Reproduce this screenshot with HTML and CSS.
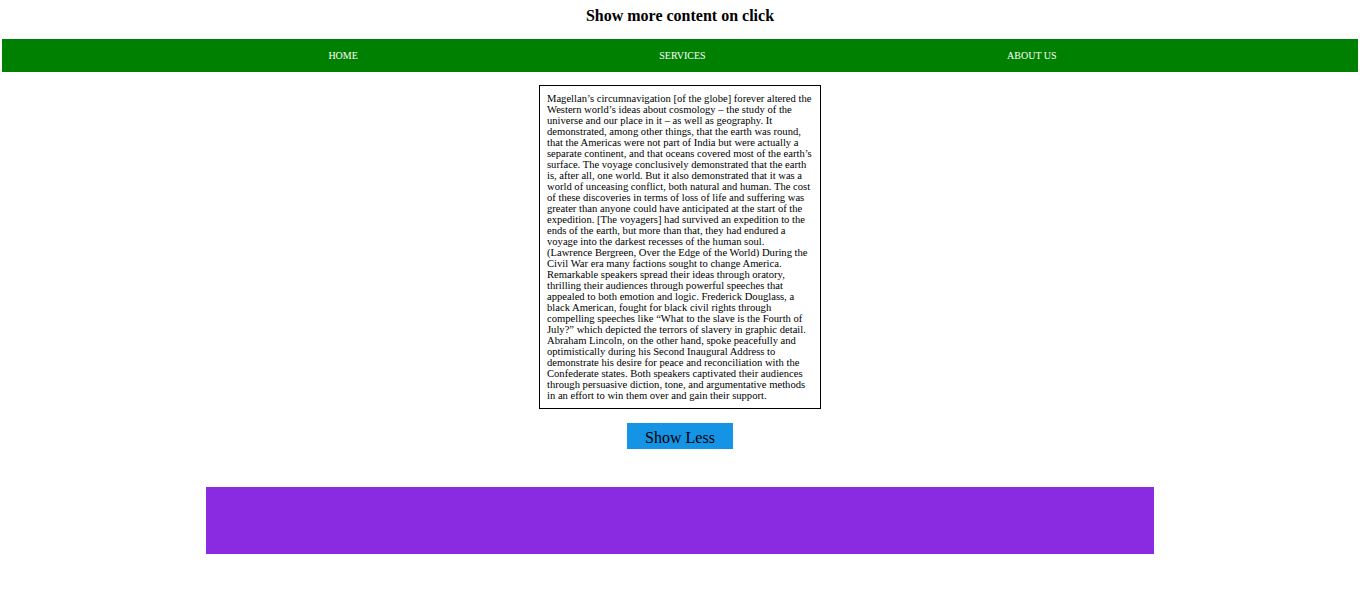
FILE: index.html
```html
<!DOCTYPE html>
<html>
<head>
<meta charset="utf-8">
<title>Show more content on click</title>
<link rel="stylesheet" href="styles.css">
</head>
<body>
<h1 class="title">Show more content on click</h1>
<nav class="nav">
  <ul class="nav-list">
    <li class="nav-item">HOME</li>
    <li class="nav-item">SERVICES</li>
    <li class="nav-item">ABOUT US</li>
  </ul>
</nav>
<main class="main">
  <div class="text-box">Magellan’s circumnavigation [of the globe] forever altered the Western world’s ideas about cosmology – the study of the universe and our place in it – as well as geography. It demonstrated, among other things, that the earth was round, that the Americas were not part of India but were actually a separate continent, and that oceans covered most of the earth’s surface. The voyage conclusively demonstrated that the earth is, after all, one world. But it also demonstrated that it was a world of unceasing conflict, both natural and human. The cost of these discoveries in terms of loss of life and suffering was greater than anyone could have anticipated at the start of the expedition. [The voyagers] had survived an expedition to the ends of the earth, but more than that, they had endured a voyage into the darkest recesses of the human soul.<br>(Lawrence Bergreen, Over the Edge of the World) During the Civil War era many factions sought to change America. Remarkable speakers spread their ideas through oratory, thrilling their audiences through powerful speeches that appealed to both emotion and logic. Frederick Douglass, a black American, fought for black civil rights through compelling speeches like “What to the slave is the Fourth of July?” which depicted the terrors of slavery in graphic detail. Abraham Lincoln, on the other hand, spoke peacefully and optimistically during his Second Inaugural Address to demonstrate his desire for peace and reconciliation with the Confederate states. Both speakers captivated their audiences through persuasive diction, tone, and argumentative methods in an effort to win them over and gain their support.</div>
  <button class="toggle-btn" type="button">Show Less</button>
  <div class="purple-box"></div>
</main>
</body>
</html>
```

FILE: styles.css
```css
html, body {
  margin: 0;
  padding: 0;
  background: #ffffff;
}

body {
  font-family: "Liberation Serif", "Times New Roman", serif;
  color: #000000;
}

.title {
  margin: 0;
  padding: 7px 0 14px;
  font-size: 16px;
  line-height: 18px;
  font-weight: bold;
  text-align: center;
}

.nav {
  margin: 0 2px;
  background: #008000;
}

.nav-list {
  list-style: none;
  margin: 0;
  padding: 0 0 0 25px;
  height: 33px;
  display: flex;
  align-items: center;
  justify-content: space-evenly;
}

.nav-item {
  color: #ffffff;
  font-size: 10px;
  line-height: 12px;
}

.main {
  display: flex;
  flex-direction: column;
  align-items: center;
  padding-top: 13px;
}

.text-box {
  width: 266px;
  padding: 7px;
  border: 1px solid #000000;
  font-size: 10.6px;
  line-height: 11px;
}

.toggle-btn {
  margin-top: 14px;
  width: 106px;
  height: 26px;
  padding: 3px 0 0;
  border: none;
  background: #1593e4;
  color: #000000;
  font-family: "Liberation Serif", "Times New Roman", serif;
  font-size: 16px;
  line-height: 18px;
}

.purple-box {
  margin-top: 38px;
  width: 948px;
  height: 67px;
  background: #8a2be2;
}
```
